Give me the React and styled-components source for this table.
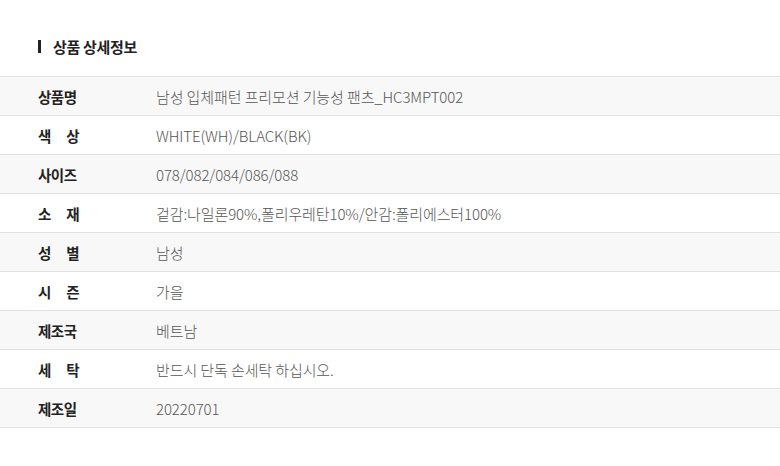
import React from "react";
import styled, { createGlobalStyle } from "styled-components";

const rows = [
  { label: "상품명", value: "남성 입체패턴 프리모션 기능성 팬츠_HC3MPT002" },
  { label: "색 상", value: "WHITE(WH)/BLACK(BK)" },
  { label: "사이즈", value: "078/082/084/086/088" },
  { label: "소 재", value: "겉감:나일론90%,폴리우레탄10%/안감:폴리에스터100%" },
  { label: "성 별", value: "남성" },
  { label: "시 즌", value: "가을" },
  { label: "제조국", value: "베트남" },
  { label: "세 탁", value: "반드시 단독 손세탁 하십시오." },
  { label: "제조일", value: "20220701" },
];

const App = () => {
  return (
    <>
      <GlobalStyle />
      <Section>
        <Title>상품 상세정보</Title>
        <Table>
          {rows.map((row, i) => (
            <Row key={row.label} shaded={i % 2 === 0}>
              <Label>{row.label}</Label>
              <Value>{row.value}</Value>
            </Row>
          ))}
        </Table>
      </Section>
    </>
  );
};

const GlobalStyle = createGlobalStyle`
  body {
    margin: 0;
    background: #fff;
    font-family: "Noto Sans CJK KR", "Noto Sans", sans-serif;
  }
`;

const Section = styled.section`
  width: 780px;
  padding-top: 36px;
`;

const Title = styled.h2`
  display: flex;
  align-items: center;
  gap: 12px;
  margin: 0 0 20px 38px;
  height: 20px;
  font-size: 15px;
  font-weight: 700;
  color: #222;
  letter-spacing: -0.3px;

  &::before {
    content: "";
    width: 3px;
    height: 13px;
    background: #222;
  }
`;

const Table = styled.div`
  border-top: 1px solid #e2e2e2;
`;

const Row = styled.div`
  display: flex;
  align-items: center;
  height: 38px;
  border-bottom: 1px solid #e2e2e2;
  background: ${({ shaded }) => (shaded ? "#f8f8f8" : "#fff")};
`;

const Label = styled.div`
  width: 41px;
  margin: 0 77px 0 38px;
  font-size: 14.5px;
  font-weight: 700;
  color: #222;
  letter-spacing: -0.5px;
  text-align: justify;
  text-align-last: justify;
  white-space: nowrap;
`;

const Value = styled.div`
  font-size: 15px;
  font-weight: 300;
  color: #555;
  letter-spacing: -0.1px;
`;

export default App;
